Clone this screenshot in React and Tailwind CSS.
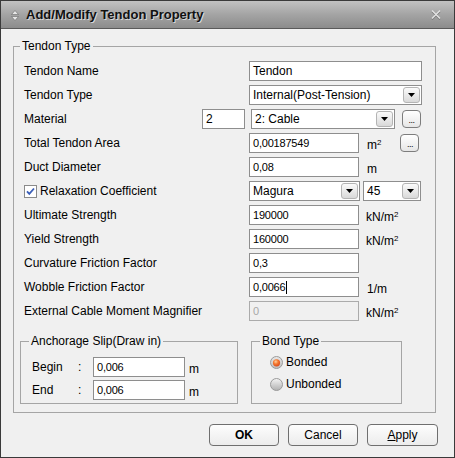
import React from "react";

const FONT = "font-['Liberation_Sans',Arial,sans-serif]";

function DropBtn() {
  return (
    <div className="mr-[1px] flex h-[16px] w-[17px] items-center justify-center rounded-[3px] border border-[#b4b4b4] bg-linear-to-b from-[#fbfbfb] to-[#d9d9d9]">
      <svg width="7" height="4" viewBox="0 0 7 4">
        <polygon points="0,0 7,0 3.5,4" fill="#000" />
      </svg>
    </div>
  );
}

function Select({ text, w }) {
  return (
    <div className={`flex h-[20px] items-center border border-[#8e8e8e] bg-white pl-[3px] ${w}`}>
      <span className="flex-1 text-[12px] leading-[14px]">{text}</span>
      <DropBtn />
    </div>
  );
}

function Field({ text, w = "w-[110px]", disabled = false, caret = false, num = true }) {
  return (
    <div
      className={`flex h-[20px] items-center border pl-[3px] ${w} ${
        disabled ? "border-[#ababab] bg-[#f0f0f0] text-[#a8a8a8]" : "border-[#8e8e8e] bg-white"
      } ${num ? "text-[11px] tracking-[-0.2px]" : "text-[12px]"}`}
    >
      <span className="leading-[14px]">{text}</span>
      {caret && <span className="ml-[1px] h-[13px] w-px bg-black" />}
    </div>
  );
}

function DotsBtn() {
  return (
    <div className="flex h-[18px] w-[19px] items-end justify-center rounded-[4px] border border-[#7d7d7d] bg-linear-to-b from-white to-[#e6e6e6] pb-[3px]">
      <span className="text-[9px] leading-[8px] tracking-[-0.5px]">...</span>
    </div>
  );
}

function Row({ label, children }) {
  return (
    <div className="flex h-[24px] items-center">
      <div className="w-[225px] shrink-0 text-[12px] leading-[14px]">{label}</div>
      {children}
    </div>
  );
}

function Unit({ children, ml = "ml-[8px]" }) {
  return <span className={`${ml} mt-[4px] text-[12px] leading-[14px]`}>{children}</span>;
}

function Radio({ checked }) {
  return checked ? (
    <svg width="13" height="13" viewBox="0 0 13 13">
      <defs>
        <radialGradient id="rgOn" cx="40%" cy="35%" r="70%">
          <stop offset="0%" stopColor="#ffd0a0" />
          <stop offset="45%" stopColor="#f57a30" />
          <stop offset="100%" stopColor="#d9471a" />
        </radialGradient>
        <linearGradient id="rgRing" x1="0" y1="0" x2="0" y2="1">
          <stop offset="0%" stopColor="#e8e8e8" />
          <stop offset="100%" stopColor="#bcbcbc" />
        </linearGradient>
      </defs>
      <circle cx="6.5" cy="6.5" r="6" fill="url(#rgRing)" stroke="#9a9a9a" strokeWidth="1" />
      <circle cx="6.5" cy="6.8" r="3.6" fill="url(#rgOn)" />
    </svg>
  ) : (
    <svg width="13" height="13" viewBox="0 0 13 13">
      <defs>
        <linearGradient id="rgOff" x1="0" y1="0" x2="0" y2="1">
          <stop offset="0%" stopColor="#f4f4f4" />
          <stop offset="100%" stopColor="#b0b0b0" />
        </linearGradient>
      </defs>
      <circle cx="6.5" cy="6.5" r="6" fill="url(#rgOff)" stroke="#9a9a9a" strokeWidth="1" />
    </svg>
  );
}

function Button({ children, w }) {
  return (
    <div
      className={`flex h-[22px] ${w} items-center justify-center rounded-[4px] border border-[#6f6f6f] bg-linear-to-b from-[#fdfdfd] to-[#ececec] text-[12px] leading-[14px]`}
    >
      {children}
    </div>
  );
}

export default function App() {
  return (
    <div className={`${FONT} flex h-[458px] w-[455px] flex-col border border-[#3a3a3a] text-black`}>
      {/* Title bar */}
      <div className="flex h-[28px] shrink-0 items-center border-b border-[#5a5a5a] bg-linear-to-b from-[#c2c2c2] via-[#a4a4a4] to-[#8c8c8c] pl-[10px] pr-[12px]">
        <svg width="8" height="11" viewBox="0 0 8 11" className="mt-[1px]">
          <polygon points="0.5,4.5 4,0.5 7.5,4.5" fill="#e6e6e6" stroke="#6a6a6a" strokeWidth="0.6" />
          <polygon points="0.5,6.5 4,10.5 7.5,6.5" fill="#e6e6e6" stroke="#6a6a6a" strokeWidth="0.6" />
        </svg>
        <span className="ml-[7px] flex-1 text-[13px] font-bold leading-[16px] text-[#111] [text-shadow:1px_1px_0_#d8d8d8]">
          Add/Modify Tendon Property
        </span>
        <svg width="12" height="12" viewBox="0 0 12 12">
          <path d="M2 2.5 L10 10.5 M10 2.5 L2 10.5" stroke="#7a7a7a" strokeWidth="1.6" />
          <path d="M2 1.5 L10 9.5 M10 1.5 L2 9.5" stroke="#e4e4e4" strokeWidth="1.4" />
        </svg>
      </div>

      {/* Body */}
      <div className="flex flex-1 flex-col bg-[#f0f0f0] pl-[12px] pt-[10px]">
        <fieldset className="m-0 h-[374px] w-[423px] border border-[#a5a5a5] pb-0 pl-[6px] pr-0 pt-0">
          <legend className="px-[2px] text-[12px] leading-[14px]">Tendon Type</legend>
          <div className="mt-[6px] flex flex-col pl-[4px]">
            <Row label="Tendon Name">
              <Field text="Tendon" w="w-[173px]" num={false} />
            </Row>
            <Row label="Tendon Type">
              <Select text="Internal(Post-Tension)" w="w-[173px]" />
            </Row>
            <div className="flex h-[24px] items-center">
              <div className="flex-1 text-[12px] leading-[14px]">Material</div>
              <Field text="2" w="w-[43px]" num={false} />
              <div className="ml-[6px]">
                <Select text="2: Cable" w="w-[144px]" />
              </div>
              <div className="ml-[7px] mr-[14px]">
                <DotsBtn />
              </div>
            </div>
            <Row label="Total Tendon Area">
              <Field text="0,00187549" />
              <Unit>
                m<sup className="text-[8px]">2</sup>
              </Unit>
              <div className="ml-[19px]">
                <DotsBtn />
              </div>
            </Row>
            <Row label="Duct Diameter">
              <Field text="0,08" />
              <Unit>m</Unit>
            </Row>
            <div className="flex h-[24px] items-center">
              <div className="flex w-[225px] shrink-0 items-center">
                <svg width="13" height="13" viewBox="0 0 13 13">
                  <rect x="0.5" y="0.5" width="12" height="12" fill="#fff" stroke="#8a8a8a" />
                  <path d="M3 6.3 L5.3 8.8 L10 3.5" fill="none" stroke="#3b5fb8" strokeWidth="1.8" />
                </svg>
                <span className="ml-[3px] text-[12px] leading-[14px]">Relaxation Coefficient</span>
              </div>
              <Select text="Magura" w="w-[111px]" />
              <div className="ml-[3px]">
                <Select text="45" w="w-[58px]" />
              </div>
            </div>
            <Row label="Ultimate Strength">
              <Field text="190000" />
              <Unit ml="ml-[7px]">
                kN/m<sup className="text-[8px]">2</sup>
              </Unit>
            </Row>
            <Row label="Yield Strength">
              <Field text="160000" />
              <Unit ml="ml-[7px]">
                kN/m<sup className="text-[8px]">2</sup>
              </Unit>
            </Row>
            <Row label="Curvature Friction Factor">
              <Field text="0,3" />
            </Row>
            <Row label="Wobble Friction Factor">
              <Field text="0,0066" caret />
              <Unit>1/m</Unit>
            </Row>
            <Row label="External Cable Moment Magnifier">
              <Field text="0" disabled />
              <Unit ml="ml-[7px]">
                kN/m<sup className="text-[8px]">2</sup>
              </Unit>
            </Row>
          </div>

          <div className="mt-[11px] flex gap-[13px]">
            <fieldset className="m-0 h-[70px] w-[218px] border border-[#a5a5a5] pb-0 pl-[8px] pr-0 pt-0">
              <legend className="px-[2px] text-[12px] leading-[14px]">Anchorage Slip(Draw in)</legend>
              <div className="mt-[7px] flex flex-col pl-[3px]">
                <div className="flex h-[23px] items-center">
                  <span className="w-[46px] text-[12px] leading-[14px]">Begin</span>
                  <span className="w-[15px] text-[12px] leading-[14px]">:</span>
                  <Field text="0,006" w="w-[92px]" />
                  <span className="ml-[4px] mt-[4px] text-[12px] leading-[14px]">m</span>
                </div>
                <div className="flex h-[23px] items-center">
                  <span className="w-[46px] text-[12px] leading-[14px]">End</span>
                  <span className="w-[15px] text-[12px] leading-[14px]">:</span>
                  <Field text="0,006" w="w-[92px]" />
                  <span className="ml-[4px] mt-[4px] text-[12px] leading-[14px]">m</span>
                </div>
              </div>
            </fieldset>
            <fieldset className="m-0 h-[70px] w-[151px] border border-[#a5a5a5] pb-0 pl-[8px] pr-0 pt-0">
              <legend className="px-[2px] text-[12px] leading-[14px]">Bond Type</legend>
              <div className="mt-[3px] flex flex-col pl-[10px]">
                <div className="flex h-[22px] items-center">
                  <Radio checked />
                  <span className="ml-[3px] text-[12px] leading-[14px]">Bonded</span>
                </div>
                <div className="flex h-[22px] items-center">
                  <Radio />
                  <span className="ml-[3px] text-[12px] leading-[14px]">Unbonded</span>
                </div>
              </div>
            </fieldset>
          </div>
        </fieldset>

        <div className="mt-[11px] flex w-[425px] justify-end gap-[9px]">
          <Button w="w-[70px]">
            <span className="font-bold">OK</span>
          </Button>
          <Button w="w-[70px]">Cancel</Button>
          <Button w="w-[71px]">
            <span>
              <span className="underline">A</span>pply
            </span>
          </Button>
        </div>
      </div>
    </div>
  );
}
